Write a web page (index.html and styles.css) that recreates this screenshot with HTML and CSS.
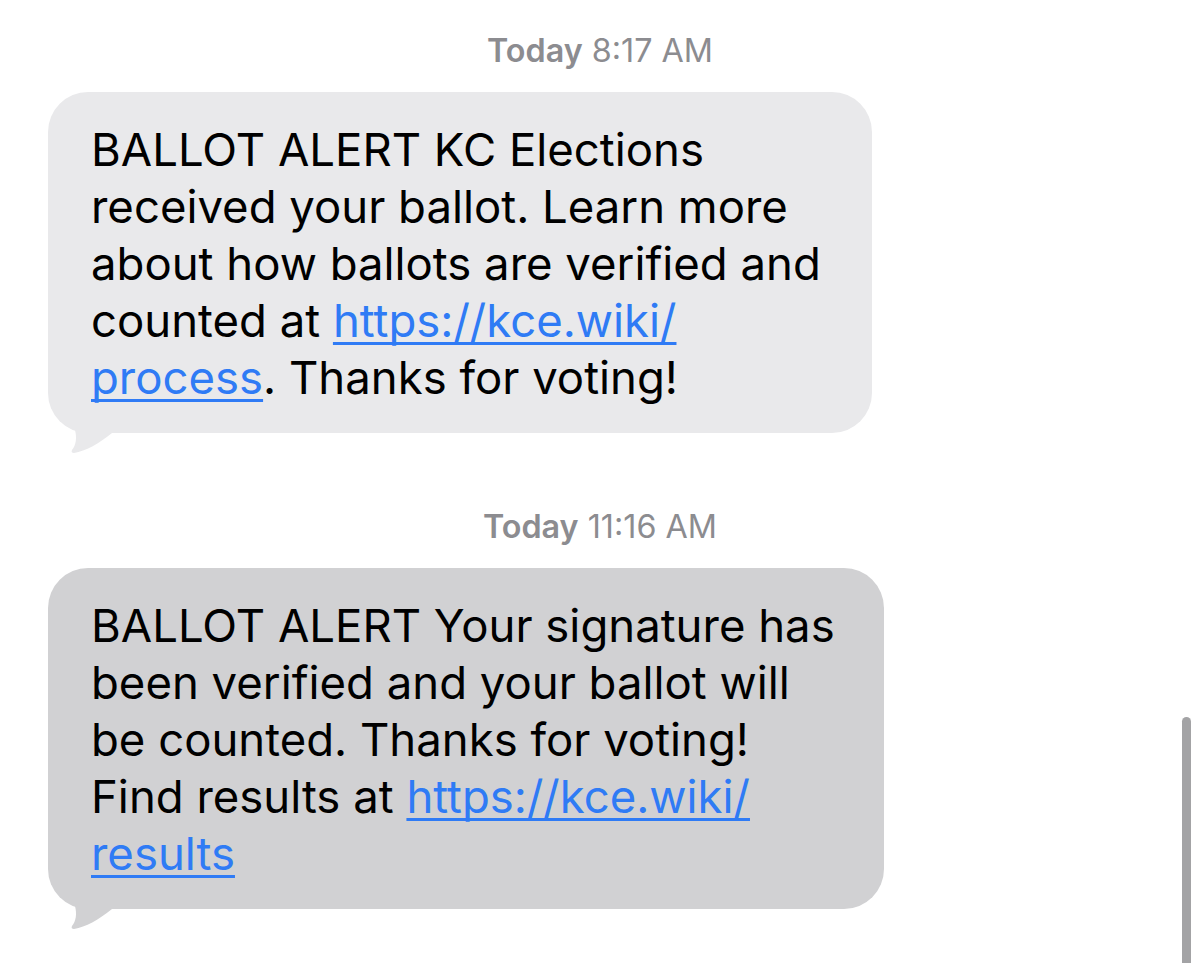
FILE: index.html
```html
<!DOCTYPE html>
<html lang="en">
<head>
<meta charset="utf-8">
<title>Messages</title>
<link rel="stylesheet" href="styles.css">
</head>
<body>
<main class="thread">
  <div class="stamp"><span class="stamp-day">Today</span> 8:17 AM</div>
  <div class="bubble bubble-first">
    <p class="msg">BALLOT ALERT KC Elections<br>received your ballot. Learn more<br>about how ballots are verified and<br>counted at <a class="link" href="#">https://kce.wiki/<br>process</a>. Thanks for voting!</p>
    <svg class="tail" viewBox="0 0 70 54" width="70" height="54" aria-hidden="true"><path d="M18 18 L27 30 C29 38 28 45 24 50 C23 52 24 53 26 53 C38 51 50 44 64 33 L64 18 Z"/></svg>
  </div>

  <div class="stamp stamp-second"><span class="stamp-day">Today</span> 11:16 AM</div>
  <div class="bubble bubble-second">
    <p class="msg">BALLOT ALERT Your signature has<br>been verified and your ballot will<br>be counted. Thanks for voting!<br>Find results at <a class="link" href="#">https://kce.wiki/<br>results</a></p>
    <svg class="tail" viewBox="0 0 70 54" width="70" height="54" aria-hidden="true"><path d="M18 18 L27 30 C29 38 28 45 24 50 C23 52 24 53 26 53 C38 51 50 44 64 33 L64 18 Z"/></svg>
  </div>
</main>
<div class="scrollbar"></div>
</body>
</html>
```

FILE: styles.css
```css
html, body {
  margin: 0;
  padding: 0;
  background: #ffffff;
}

body {
  width: 1200px;
  height: 963px;
  overflow: hidden;
  font-family: Inter, "Liberation Sans", Arial, sans-serif;
  color: #000;
}

.thread {
  display: flex;
  flex-direction: column;
  align-items: flex-start;
  padding: 33px 0 0 48px;
}

.stamp {
  align-self: stretch;
  margin-left: -48px;
  text-align: center;
  font-size: 32.3px;
  line-height: 36px;
  color: #8c8c90;
  margin-bottom: 23px;
}

.stamp-day {
  font-weight: 600;
}

.stamp-second {
  margin-top: 76px;
}

.bubble {
  position: relative;
  box-sizing: border-box;
  border-radius: 40px;
  padding: 29px 20px 27px 43px;
}

.bubble-first {
  width: 824px;
  background: #e9e9eb;
}

.bubble-first .tail {
  fill: #e9e9eb;
}

.bubble-second {
  width: 836px;
  background: #d1d1d3;
}

.bubble-second .tail {
  fill: #d1d1d3;
}

.msg {
  margin: 0;
  font-size: 45.5px;
  line-height: 57px;
  white-space: nowrap;
  position: relative;
  z-index: 1;
}

.link {
  color: #2f7bf5;
  text-decoration: underline;
  text-decoration-thickness: 3px;
  text-underline-offset: 5px;
  text-decoration-skip-ink: none;
}

.tail {
  position: absolute;
  left: 0;
  bottom: -21px;
  display: block;
}

.scrollbar {
  position: absolute;
  left: 1182px;
  top: 717px;
  width: 9px;
  height: 260px;
  border-radius: 5px;
  background: #a3a3a5;
}
```
